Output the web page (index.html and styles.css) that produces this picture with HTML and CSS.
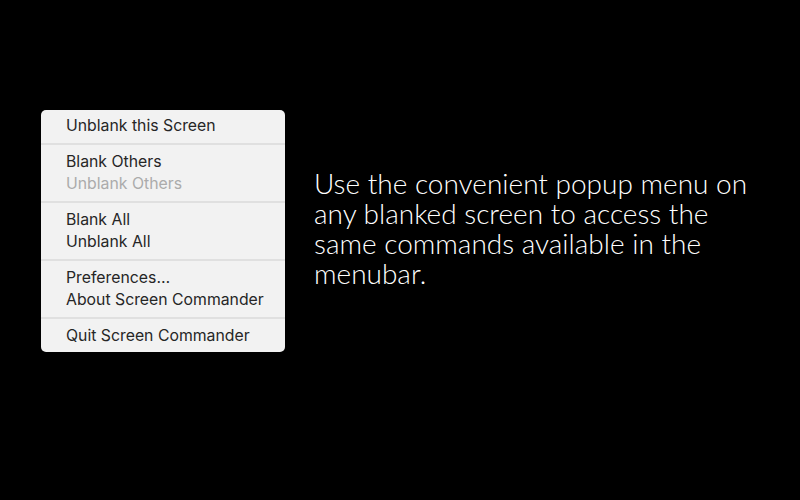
FILE: index.html
```html
<!DOCTYPE html>
<html>
<head>
<meta charset="utf-8">
<link rel="stylesheet" href="styles.css">
</head>
<body>
<div class="stage">
  <div class="menu">
    <div class="item">Unblank this Screen</div>
    <div class="sep"></div>
    <div class="item">Blank Others</div>
    <div class="item disabled">Unblank Others</div>
    <div class="sep"></div>
    <div class="item">Blank All</div>
    <div class="item">Unblank All</div>
    <div class="sep"></div>
    <div class="item">Preferences…</div>
    <div class="item">About Screen Commander</div>
    <div class="sep"></div>
    <div class="item">Quit Screen Commander</div>
  </div>
  <p class="caption">Use the convenient popup menu on any blanked screen to access the same commands available in the menubar.</p>
</div>
</body>
</html>
```
FILE: styles.css
```css
html, body {
  margin: 0;
  padding: 0;
  background: #000;
  width: 800px;
  height: 500px;
  overflow: hidden;
}
.stage {
  display: flex;
  align-items: flex-start;
  padding: 110px 0 0 41px;
}
.menu {
  width: 244px;
  background: #f2f2f2;
  border-radius: 5px;
  padding: 5px 0;
  font-family: "Inter", "Liberation Sans", sans-serif;
  font-size: 15.8px;
  color: #262626;
}
.item {
  height: 22px;
  line-height: 22px;
  padding-left: 25px;
  white-space: nowrap;
}
.item.disabled {
  color: #ababab;
}
.sep {
  height: 2px;
  background: #e0e0e0;
  margin: 6px 0;
}
.caption {
  margin: 0 0 0 29px;
  padding-top: 58px;
  width: 445px;
  font-family: "Lato", sans-serif;
  font-weight: 300;
  font-size: 28px;
  line-height: 30px;
  color: #fff;
}
```
